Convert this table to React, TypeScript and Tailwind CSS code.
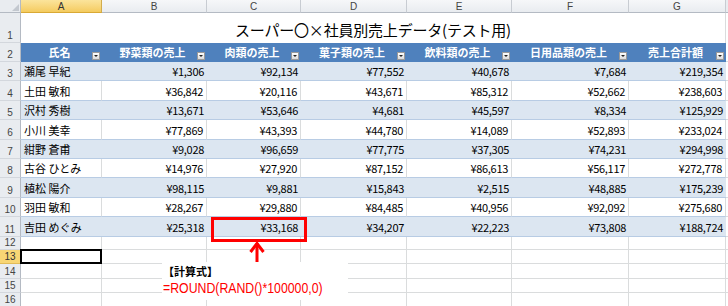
import React from 'react';

const COL_W = ['w-[81px]', 'w-[105px]', 'w-[94px]', 'w-[106px]', 'w-[105px]', 'w-[117px]', 'w-[97px]'];
const LETTERS = ['A', 'B', 'C', 'D', 'E', 'F', 'G'];
const HEADERS = ['氏名', '野菜類の売上', '肉類の売上', '菓子類の売上', '飲料類の売上', '日用品類の売上', '売上合計額'];

// 行3〜11のデータ
const DATA: [string, string[]][] = [
  ['瀬尾 早紀', ['¥1,306', '¥92,134', '¥77,552', '¥40,678', '¥7,684', '¥219,354']],
  ['土田 敏和', ['¥36,842', '¥20,116', '¥43,671', '¥85,312', '¥52,662', '¥238,603']],
  ['沢村 秀樹', ['¥13,671', '¥53,646', '¥4,681', '¥45,597', '¥8,334', '¥125,929']],
  ['小川 美幸', ['¥77,869', '¥43,393', '¥44,780', '¥14,089', '¥52,893', '¥233,024']],
  ['紺野 蒼甫', ['¥9,028', '¥96,659', '¥77,775', '¥37,305', '¥74,231', '¥294,998']],
  ['古谷 ひとみ', ['¥14,976', '¥27,920', '¥87,152', '¥86,613', '¥56,117', '¥272,778']],
  ['植松 陽介', ['¥98,115', '¥9,881', '¥15,843', '¥2,515', '¥48,885', '¥175,239']],
  ['羽田 敏和', ['¥28,267', '¥29,880', '¥84,485', '¥40,956', '¥92,092', '¥275,680']],
  ['吉田 めぐみ', ['¥25,318', '¥33,168', '¥34,207', '¥22,223', '¥73,808', '¥188,724']],
];

const DATA_H = ['h-[19px]', 'h-[20px]', 'h-[19px]', 'h-[20px]', 'h-[19px]', 'h-[19px]', 'h-[20px]', 'h-[19px]', 'h-[20px]'];
const EMPTY_ROWS: [number, string][] = [
  [12, 'h-[13px]'],
  [13, 'h-[14px]'],
  [14, 'h-[15px]'],
  [15, 'h-[14px]'],
  [16, 'h-[14px]'],
];

const RowNum = ({ n, active = false }: { n: number; active?: boolean }) => (
  <div
    className={`w-[21px] shrink-0 h-full flex items-end justify-center pb-[1px] border-r border-b text-[10px] leading-[11px] font-['Liberation_Sans',sans-serif] ${
      active
        ? 'bg-[#f8d675] border-r-[#c9a443] border-b-[#e2bc59] text-[#333]'
        : 'bg-[#e9ecf0] border-r-[#b4bac3] border-b-[#d3d7dd] text-[#444]'
    }`}
  >
    {n}
  </div>
);

const FilterBtn = () => (
  <span className="absolute right-[2px] bottom-[2px] w-[8px] h-[8px] bg-gradient-to-b from-white to-[#dcdcdc] border border-[#9a9a9a] flex items-center justify-center">
    <svg width="4" height="2" viewBox="0 0 4 2">
      <path d="M0 0 L4 0 L2 2 Z" fill="#222" />
    </svg>
  </span>
);

export default function App() {
  return (
    <div className="relative w-[728px] h-[306px] overflow-hidden bg-white text-black font-['Noto_Sans_CJK_JP',sans-serif]">
      {/* 列見出し */}
      <div className="flex h-[13px]">
        <div className="w-[21px] shrink-0 bg-[#e9ecf0] border-r border-b border-[#b4bac3] relative">
          <svg className="absolute right-[1px] bottom-[1px]" width="7" height="7" viewBox="0 0 7 7">
            <path d="M7 0 L7 7 L0 7 Z" fill="#c3c8cf" />
          </svg>
        </div>
        {LETTERS.map((l, i) => (
          <div
            key={l}
            className={`${COL_W[i]} shrink-0 flex items-center justify-center border-r border-b text-[10px] leading-[11px] font-['Liberation_Sans',sans-serif] ${
              i === 0
                ? 'bg-gradient-to-b from-[#fbe49b] to-[#f4cb5e] border-r-[#d2ac4d] border-b-[#d9a935] text-[#333]'
                : 'bg-gradient-to-b from-[#f6f7f9] to-[#e9ecf0] border-r-[#c8ccd2] border-b-[#b4bac3] text-[#444]'
            }`}
          >
            {l}
          </div>
        ))}
        <div className="flex-1 bg-[#e9ecf0] border-b border-[#b4bac3]" />
      </div>

      {/* 1行目: タイトル */}
      <div className="flex h-[30px]">
        <RowNum n={1} />
        <div className="w-[705px] shrink-0 flex items-center justify-center pt-[2px] text-[15px] leading-none tracking-[-0.2px] border-r border-[#dadcdd]">
          スーパー〇×社員別売上データ(テスト用)
        </div>
        <div className="flex-1" />
      </div>

      {/* 2行目: 見出し */}
      <div className="flex h-[19px]">
        <RowNum n={2} />
        {HEADERS.map((h, i) => (
          <div
            key={h}
            className={`${COL_W[i]} shrink-0 relative flex items-center justify-center bg-[#4f81bd] text-white font-bold text-[11px] leading-none pr-[4px]`}
          >
            {h}
            <FilterBtn />
          </div>
        ))}
        <div className="flex-1 border-b border-[#dadcdd]" />
      </div>

      {/* 3〜11行目 */}
      {DATA.map(([name, nums], r) => {
        const band = r % 2 === 0;
        return (
          <div key={name} className={`flex ${DATA_H[r]}`}>
            <RowNum n={r + 3} />
            <div
              className={`${COL_W[0]} shrink-0 flex items-end pl-[3px] pb-[3px] text-[11px] leading-none border-b ${
                band ? 'bg-[#dce6f1] border-b-[#b8cce4]' : 'bg-white border-r border-r-[#dadcdd] border-b-[#b8cce4]'
              }`}
            >
              {name}
            </div>
            {nums.map((v, c) => (
              <div
                key={c}
                className={`${COL_W[c + 1]} shrink-0 flex items-end justify-end pr-[3px] pb-[3px] text-[11px] leading-none tracking-[-0.3px] border-b ${
                  band ? 'bg-[#dce6f1] border-b-[#b8cce4]' : 'bg-white border-r border-r-[#dadcdd] border-b-[#b8cce4]'
                }`}
              >
                {v}
              </div>
            ))}
            <div className="flex-1 border-b border-[#dadcdd]" />
          </div>
        );
      })}

      {/* 12〜16行目 */}
      {EMPTY_ROWS.map(([n, h]) => (
        <div key={n} className={`flex ${h}`}>
          <RowNum n={n} active={n === 13} />
          {COL_W.map((w, c) => (
            <div key={c} className={`${w} shrink-0 relative border-r border-b border-[#dadcdd]`}>
              {n === 13 && c === 0 && <span className="absolute -left-[1px] -top-[1px] right-[-1px] bottom-[-1px] border-2 border-black" />}
            </div>
          ))}
          <div className="flex-1 border-b border-[#dadcdd]" />
        </div>
      ))}

      {/* 赤枠 (C11) */}
      <div className="absolute left-[211px] top-[217px] w-[96px] h-[25px] border-[3px] border-[#ff0000]" />

      {/* 矢印 */}
      <svg className="absolute left-[248px] top-[241px]" width="18" height="24" viewBox="0 0 18 24">
        <path d="M9 2 L9 23" stroke="#ff0000" strokeWidth="3" />
        <path d="M2.5 11 L9 2.5 L15.5 11" stroke="#ff0000" strokeWidth="3" fill="none" />
      </svg>

      {/* 計算式テキストボックス */}
      <div className="absolute left-[162px] top-[262px] w-[186px] h-[38px] bg-white flex flex-col pl-[1px] pt-[1px]">
        <div className="text-[11px] font-bold leading-[16px]">【計算式】</div>
        <div className="text-[15px] leading-[17px] text-[#ff0000] font-['Liberation_Sans',sans-serif] scale-x-[0.82] origin-left whitespace-nowrap">
          =ROUND(RAND()*100000,0)
        </div>
      </div>
    </div>
  );
}
